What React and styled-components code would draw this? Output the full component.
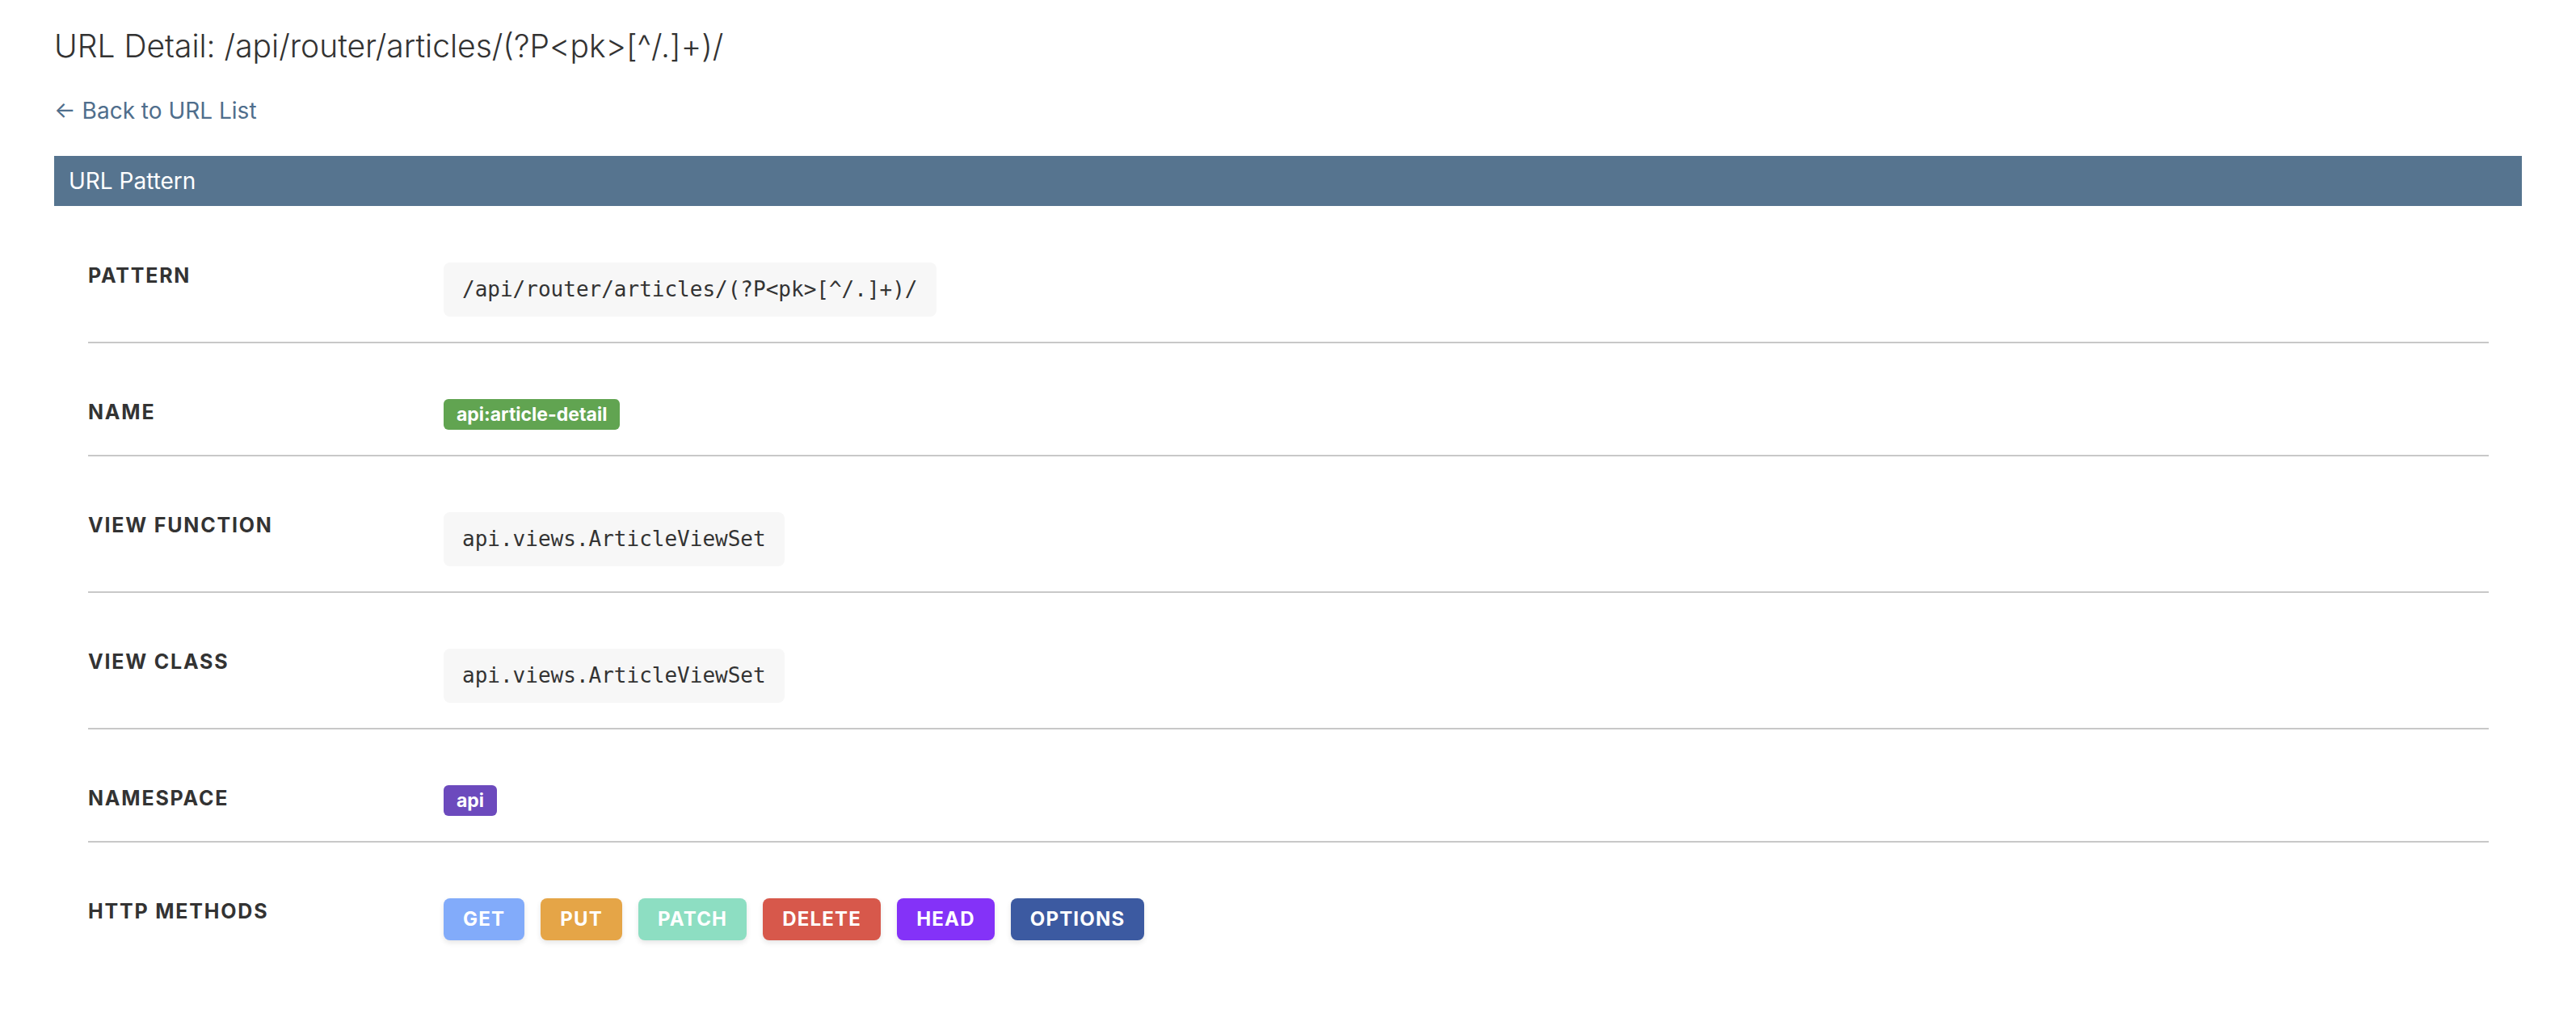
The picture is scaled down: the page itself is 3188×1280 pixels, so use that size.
import React from "react";
import styled, { createGlobalStyle } from "styled-components";

const GlobalStyle = createGlobalStyle`
    html, body {
        margin: 0;
        padding: 0;
        background: #ffffff;
    }
    body {
        font-family: Inter, "Noto Sans", "Liberation Sans", sans-serif;
        color: #333333;
    }
`;

const Page = styled.div`
    padding: 33px 67px 0;
`;

const Title = styled.h1`
    margin: 0;
    font-size: 39px;
    line-height: 47px;
    font-weight: 300;
    color: #333333;
`;

const BackLink = styled.a`
    display: inline-block;
    margin-top: 40px;
    font-size: 28px;
    line-height: 34px;
    color: #4f6e8c;
    text-decoration: none;
`;

const Card = styled.section`
    margin-top: 39px;
`;

const CardHeader = styled.div`
    display: flex;
    align-items: center;
    height: 62px;
    padding: 0 18px;
    background: #56748f;
    color: #ffffff;
    font-size: 28px;
`;

const CardBody = styled.div`
    padding: 1px 41px 0 42px;
`;

const Row = styled.div`
    display: grid;
    grid-template-columns: 440px 1fr;
    align-items: start;
    padding: 69px 0 31px;
    border-bottom: 2px solid #c8c8c8;

    &:last-child {
        border-bottom: none;
    }
`;

const Label = styled.div`
    padding-top: 1px;
    font-size: 25px;
    line-height: 30px;
    font-weight: 700;
    letter-spacing: 1.8px;
    text-transform: uppercase;
    color: #333333;
`;

const Value = styled.div`
    display: flex;
    flex-wrap: wrap;
    gap: 20px;
`;

const Code = styled.code`
    display: inline-block;
    padding: 16px 23px;
    background: #f7f7f7;
    border-radius: 8px;
    font-family: "DejaVu Sans Mono", "Liberation Mono", monospace;
    font-size: 26px;
    line-height: 35px;
    color: #333333;
`;

const Badge = styled.span`
    display: inline-block;
    height: 38px;
    padding: 0 16px;
    border-radius: 6px;
    background: ${(p) => p.$color};
    color: #ffffff;
    font-size: 23px;
    font-weight: 700;
    line-height: 38px;
`;

const Method = styled.span`
    display: inline-block;
    padding: 12px 24px;
    border-radius: 8px;
    background: ${(p) => p.$color};
    box-shadow: 0 3px 6px rgba(0, 0, 0, 0.1);
    color: #ffffff;
    font-size: 24px;
    font-weight: 700;
    line-height: 28px;
    letter-spacing: 1.2px;
`;

const methods = [
    { name: "GET", color: "#82abfa" },
    { name: "PUT", color: "#e5a547" },
    { name: "PATCH", color: "#8ddec2" },
    { name: "DELETE", color: "#d7584b" },
    { name: "HEAD", color: "#8432f8" },
    { name: "OPTIONS", color: "#3c5aa1" },
];

export default function App() {
    const pattern = "/api/router/articles/(?P<pk>[^/.]+)/";
    return (
        <Page>
            <GlobalStyle />
            <Title>URL Detail: {pattern}</Title>
            <BackLink href="#">← Back to URL List</BackLink>
            <Card>
                <CardHeader>URL Pattern</CardHeader>
                <CardBody>
                    <Row>
                        <Label>Pattern</Label>
                        <Value><Code>{pattern}</Code></Value>
                    </Row>
                    <Row>
                        <Label>Name</Label>
                        <Value><Badge $color="#61a451">api:article-detail</Badge></Value>
                    </Row>
                    <Row>
                        <Label>View Function</Label>
                        <Value><Code>api.views.ArticleViewSet</Code></Value>
                    </Row>
                    <Row>
                        <Label>View Class</Label>
                        <Value><Code>api.views.ArticleViewSet</Code></Value>
                    </Row>
                    <Row>
                        <Label>Namespace</Label>
                        <Value><Badge $color="#6c4abd">api</Badge></Value>
                    </Row>
                    <Row>
                        <Label>HTTP Methods</Label>
                        <Value>
                            {methods.map((m) => (
                                <Method key={m.name} $color={m.color}>{m.name}</Method>
                            ))}
                        </Value>
                    </Row>
                </CardBody>
            </Card>
        </Page>
    );
}
